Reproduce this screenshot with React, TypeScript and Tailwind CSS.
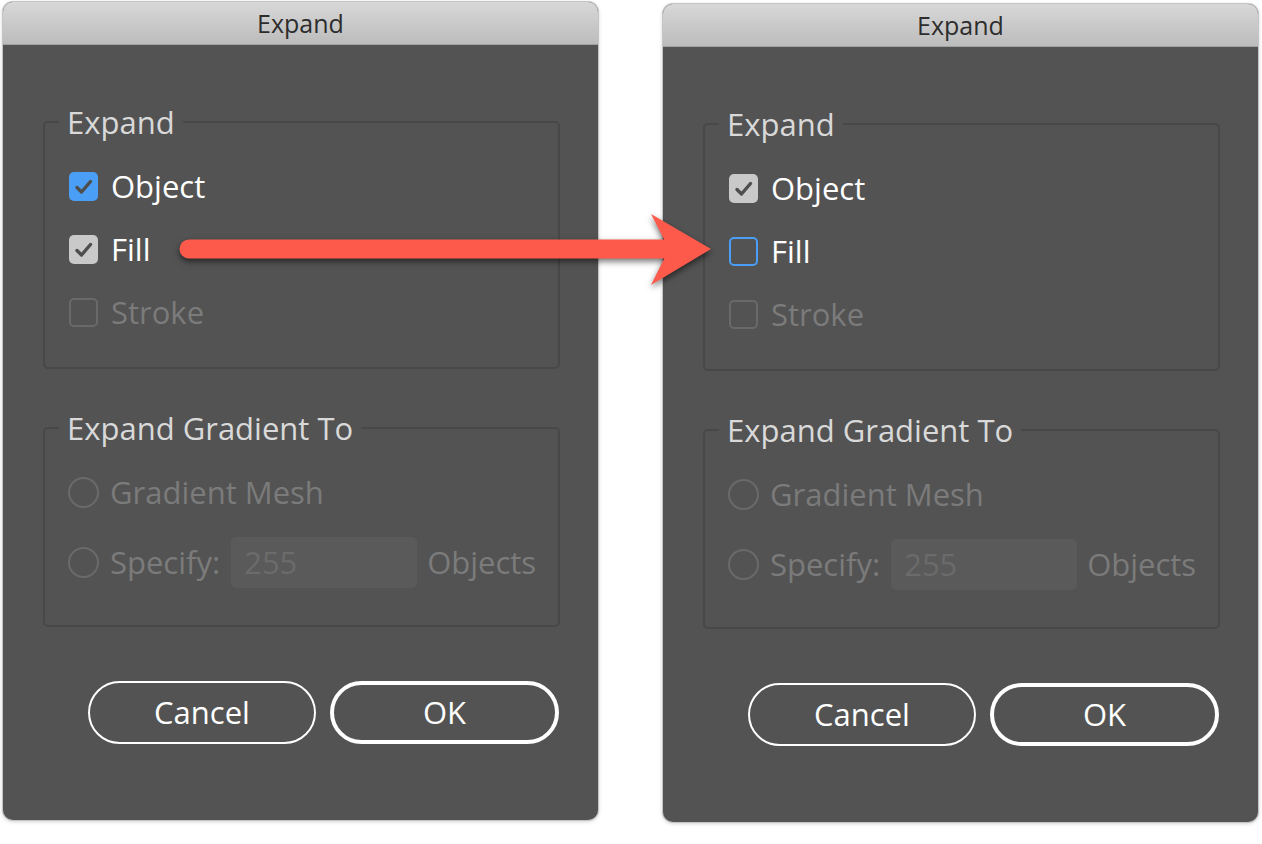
import React from 'react'

const font = { fontFamily: '"Open Sans", "Noto Sans", sans-serif' }

function CheckMark() {
  return (
    <svg width="29" height="29" viewBox="0 0 29 29" className="block">
      <path d="M8 15.5 L12.5 20 L21.5 9.5" fill="none" stroke="#4e4e4e" strokeWidth="3.4" strokeLinecap="round" strokeLinejoin="round" />
    </svg>
  )
}

function Checkbox({ kind }: { kind: 'blue' | 'gray' | 'focus' | 'disabled' }) {
  if (kind === 'blue') return <div className="w-[29px] h-[29px] rounded-[5px] bg-[#4a9ef5]"><CheckMark /></div>
  if (kind === 'gray') return <div className="w-[29px] h-[29px] rounded-[5px] bg-[#c9c9c9]"><CheckMark /></div>
  if (kind === 'focus') return <div className="w-[29px] h-[29px] rounded-[5px] border-2 border-[#4a9ef5]" />
  return <div className="w-[29px] h-[29px] rounded-[5px] border-2 border-[#696969]" />
}

function CheckRow({ kind, label }: { kind: 'blue' | 'gray' | 'focus' | 'disabled'; label: string }) {
  const disabled = kind === 'disabled'
  return (
    <div className="flex items-center gap-[13px] h-[40px] pl-[1px]">
      <Checkbox kind={kind} />
      <span className={`text-[31px] font-medium leading-none ${disabled ? 'text-[#7b7b7b]' : 'text-white'}`}>{label}</span>
    </div>
  )
}

function Radio() {
  return <div className="w-[31px] h-[31px] rounded-full border-2 border-[#6a6a6a] shrink-0" />
}

function Group({ title, children, className }: { title: string; children: React.ReactNode; className?: string }) {
  return (
    <fieldset className={`border-2 border-[#484848] rounded-[5px] pl-[23px] pr-4 ${className ?? ''}`}>
      <legend className="ml-[-9px] px-[8px] text-[31px] font-medium leading-[36px] text-[#d9d9d9]">{title}</legend>
      {children}
    </fieldset>
  )
}

function Dialog({ right }: { right?: boolean }) {
  return (
    <div
      className={`w-[595px] h-[818px] bg-[#535353] rounded-[10px] overflow-hidden shadow-[0_0_0_1px_#c4c4c4,0_1px_4px_rgba(0,0,0,0.25)] flex flex-col ${right ? 'mt-[2px]' : ''}`}
      style={font}
    >
      <div className="h-[43px] shrink-0 bg-gradient-to-b from-[#d8d8d8] to-[#bcbcbc] border-b border-[#a2a2a2] flex items-center justify-center pt-[1px]">
        <span className="text-[25px] leading-none text-[#2d2d2d]">Expand</span>
      </div>

      <div className="flex flex-col pl-[40px] pr-[38px] pt-[59px]">
        <Group title="Expand" className="pt-[26px] pb-[35px]">
          <div className="flex flex-col gap-[23px]">
            <CheckRow kind={right ? 'gray' : 'blue'} label="Object" />
            <CheckRow kind={right ? 'focus' : 'gray'} label="Fill" />
            <CheckRow kind="disabled" label="Stroke" />
          </div>
        </Group>

        <Group title="Expand Gradient To" className="mt-[41px] pt-[26px] pb-[37px]">
          <div className="flex flex-col gap-[24px]">
            <div className="flex items-center gap-[11px] h-[40px]">
              <Radio />
              <span className="text-[31px] font-medium leading-none text-[#7b7b7b]">Gradient Mesh</span>
            </div>
            <div className="flex items-center h-[52px]">
              <Radio />
              <span className="ml-[11px] text-[31px] font-medium leading-none text-[#7b7b7b]">Specify:</span>
              <div className="ml-[11px] w-[186px] h-[51px] rounded-[5px] bg-[#5a5a5a] flex items-center pl-[13px]">
                <span className="text-[31px] font-medium leading-none text-[#6b6b6b]">255</span>
              </div>
              <span className="ml-[10px] text-[31px] font-medium leading-none text-[#7b7b7b]">Objects</span>
            </div>
          </div>
        </Group>

        <div className="flex justify-end gap-[14px] mt-[54px] pr-[1px]">
          <button className="w-[228px] h-[63px] rounded-full border-2 border-white text-white text-[31px] font-medium leading-none">Cancel</button>
          <button className="w-[229px] h-[63px] rounded-full border-[4px] border-white text-white text-[31px] font-medium leading-none">OK</button>
        </div>
      </div>
    </div>
  )
}

export default function App() {
  return (
    <div className="relative w-[1262px] h-[844px] bg-white flex items-start gap-[65px] pl-[3px] pt-[2px]">
      <Dialog />
      <Dialog right />
      {/* red annotation arrow */}
      <svg
        className="absolute left-0 top-0 pointer-events-none drop-shadow-[0_3px_3px_rgba(0,0,0,0.55)]"
        width="1262"
        height="844"
        viewBox="0 0 1262 844"
      >
        <line x1="189" y1="249" x2="668" y2="249" stroke="#fe5a4b" strokeWidth="19" strokeLinecap="round" />
        <polygon points="651,214 711,249 651,285 669,249" fill="#fe5a4b" />
      </svg>
    </div>
  )
}
